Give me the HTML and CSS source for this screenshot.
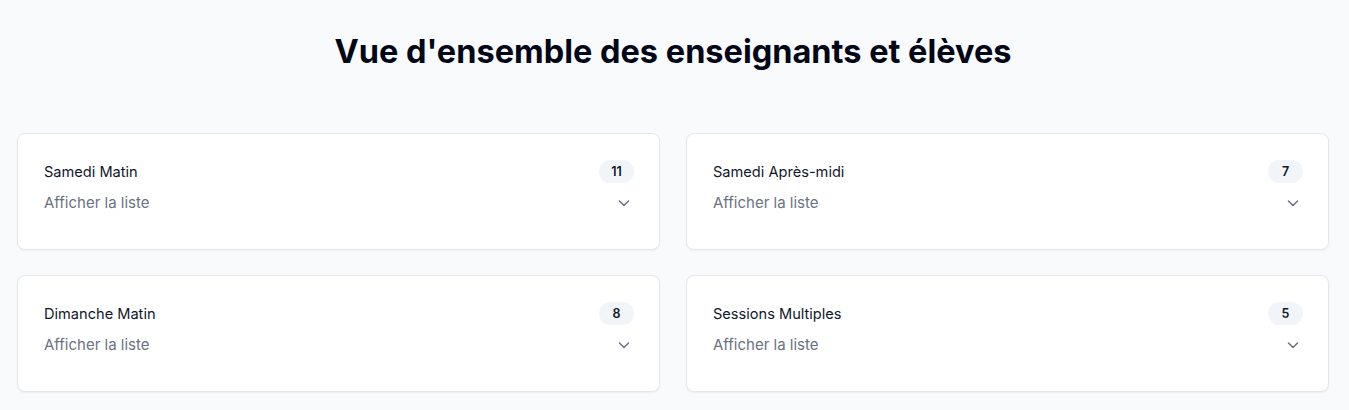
FILE: index.html
```html
<!DOCTYPE html>
<html lang="fr">
<head>
<meta charset="utf-8">
<title>Vue d'ensemble</title>
<link rel="stylesheet" href="styles.css">
</head>
<body>
<main class="page">
  <h1 class="title">Vue d'ensemble des enseignants et élèves</h1>
  <div class="grid">
    <section class="card">
      <div class="card-head"><span class="card-name">Samedi Matin</span><span class="badge">11</span></div>
      <button class="toggle"><span>Afficher la liste</span><svg class="chev" viewBox="0 0 20 20" width="20" height="20"><path d="M5.5 8l4.5 4.5 4.5-4.5"/></svg></button>
    </section>
    <section class="card">
      <div class="card-head"><span class="card-name">Samedi Après-midi</span><span class="badge">7</span></div>
      <button class="toggle"><span>Afficher la liste</span><svg class="chev" viewBox="0 0 20 20" width="20" height="20"><path d="M5.5 8l4.5 4.5 4.5-4.5"/></svg></button>
    </section>
    <section class="card">
      <div class="card-head"><span class="card-name">Dimanche Matin</span><span class="badge">8</span></div>
      <button class="toggle"><span>Afficher la liste</span><svg class="chev" viewBox="0 0 20 20" width="20" height="20"><path d="M5.5 8l4.5 4.5 4.5-4.5"/></svg></button>
    </section>
    <section class="card">
      <div class="card-head"><span class="card-name">Sessions Multiples</span><span class="badge">5</span></div>
      <button class="toggle"><span>Afficher la liste</span><svg class="chev" viewBox="0 0 20 20" width="20" height="20"><path d="M5.5 8l4.5 4.5 4.5-4.5"/></svg></button>
    </section>
  </div>
</main>
</body>
</html>
```
FILE: styles.css
```css
* { box-sizing: border-box; }
html, body { margin: 0; padding: 0; }
body {
  background: #f8fafc;
  font-family: Inter, "Noto Sans", sans-serif;
  color: #0f172a;
}
.page {
  padding: 32px 20px 20px 17px;
}
.title {
  margin: 0 0 62px;
  text-align: center;
  font-size: 32.5px;
  line-height: 39px;
  font-weight: 700;
  color: #020617;
}
.grid {
  display: grid;
  grid-template-columns: 1fr 1fr;
  column-gap: 26px;
  row-gap: 25px;
}
.card {
  background: #fff;
  border: 1px solid #e5e7eb;
  border-radius: 8px;
  box-shadow: 0 1px 2px rgba(0,0,0,0.05);
  height: 117px;
  padding: 26px 25px 0 26px;
}
.card-head {
  display: flex;
  align-items: center;
  justify-content: space-between;
  height: 23px;
}
.card-name {
  font-size: 14.6px;
  font-weight: 400;
  color: #0f172a;
}
.badge {
  display: inline-flex;
  align-items: center;
  justify-content: center;
  min-width: 35px;
  height: 23px;
  padding: 0 10px;
  border-radius: 12px;
  background: #f1f5f9;
  font-size: 12.5px;
  font-weight: 600;
  color: #0f172a;
}
.toggle {
  display: flex;
  align-items: center;
  justify-content: space-between;
  width: 100%;
  margin-top: 10px;
  padding: 0;
  border: 0;
  background: none;
  font-family: inherit;
  font-size: 15px;
  line-height: 20px;
  color: #6b7280;
  cursor: pointer;
}
.chev {
  fill: none;
  stroke: #6b7280;
  stroke-width: 1.5;
  stroke-linecap: round;
  stroke-linejoin: round;
}
```
